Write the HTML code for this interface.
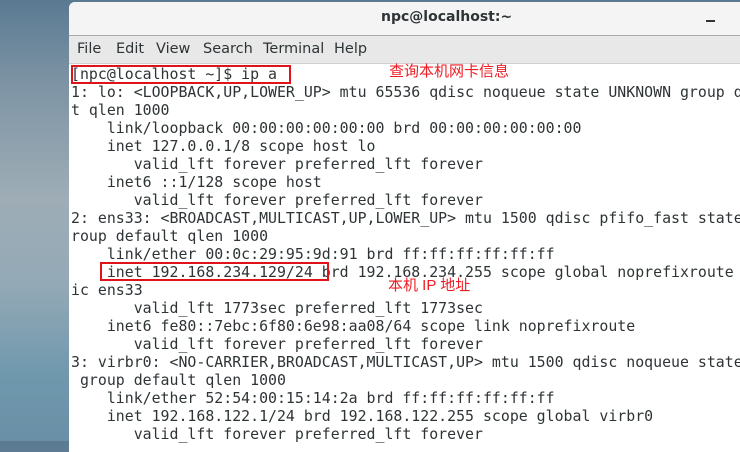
<!DOCTYPE html>
<html><head><meta charset="utf-8">
<style>
html,body{margin:0;padding:0;}
body{width:740px;height:441px;overflow:hidden;position:relative;
background:linear-gradient(180deg,#5a7a92 0%,#7f95a5 20%,#9eadb6 45%,#93a9b6 65%,#6f98ad 85%,#6a8fa6 100%);}
.win{position:absolute;left:69px;top:2px;width:680px;height:450px;background:#fff;border-top-left-radius:6px;overflow:hidden;}
.title{position:absolute;left:0;top:0;width:100%;height:33px;background:#f4f4f4;border-bottom:1px solid #a8a8a8;}
.title .t{position:absolute;left:312px;top:7px;font:bold 14px "DejaVu Sans","Liberation Sans",sans-serif;color:#2e3436;}
.title .min{position:absolute;left:637px;top:18px;width:9px;height:2px;background:#2e3436;}
.menu{position:absolute;left:0;top:34px;width:100%;height:27px;background:#e8e8e8;border-bottom:1px solid #d0d0d0;font:14.5px "DejaVu Sans","Liberation Sans",sans-serif;color:#2e3436;}
.menu span{position:absolute;top:5px;}
pre{position:absolute;left:2px;top:63px;margin:0;font:14.88px/18px "DejaVu Sans Mono","Liberation Mono",monospace;color:#2e3436;white-space:pre;}
.box{position:absolute;border:2px solid #e0131b;}
.lab{position:absolute;font:15px "Liberation Sans","Noto Sans CJK SC",sans-serif;color:#f01c24;}
</style></head><body>
<div class="win">
<div class="title"><span class="t">npc@localhost:~</span><div class="min"></div></div>
<div class="menu"><span style="left:8px">File</span><span style="left:47px">Edit</span><span style="left:87px">View</span><span style="left:134px">Search</span><span style="left:194px">Terminal</span><span style="left:265px">Help</span></div>
<pre>[npc@localhost ~]$ ip a
1: lo: &lt;LOOPBACK,UP,LOWER_UP&gt; mtu 65536 qdisc noqueue state UNKNOWN group d
t qlen 1000
    link/loopback 00:00:00:00:00:00 brd 00:00:00:00:00:00
    inet 127.0.0.1/8 scope host lo
       valid_lft forever preferred_lft forever
    inet6 ::1/128 scope host
       valid_lft forever preferred_lft forever
2: ens33: &lt;BROADCAST,MULTICAST,UP,LOWER_UP&gt; mtu 1500 qdisc pfifo_fast state
roup default qlen 1000
    link/ether 00:0c:29:95:9d:91 brd ff:ff:ff:ff:ff:ff
    inet 192.168.234.129/24 brd 192.168.234.255 scope global noprefixroute
ic ens33
       valid_lft 1773sec preferred_lft 1773sec
    inet6 fe80::7ebc:6f80:6e98:aa08/64 scope link noprefixroute
       valid_lft forever preferred_lft forever
3: virbr0: &lt;NO-CARRIER,BROADCAST,MULTICAST,UP&gt; mtu 1500 qdisc noqueue state
 group default qlen 1000
    link/ether 52:54:00:15:14:2a brd ff:ff:ff:ff:ff:ff
    inet 192.168.122.1/24 brd 192.168.122.255 scope global virbr0
       valid_lft forever preferred_lft forever</pre>
</div>
<div class="box" style="left:71px;top:65px;width:216px;height:15px;"></div>
<div class="box" style="left:100px;top:262px;width:225px;height:15px;"></div>
<div class="lab" style="left:389px;top:60px;">查询本机网卡信息</div>
<div class="lab" style="left:388px;top:274px;">本机 IP 地址</div>
</body></html>
